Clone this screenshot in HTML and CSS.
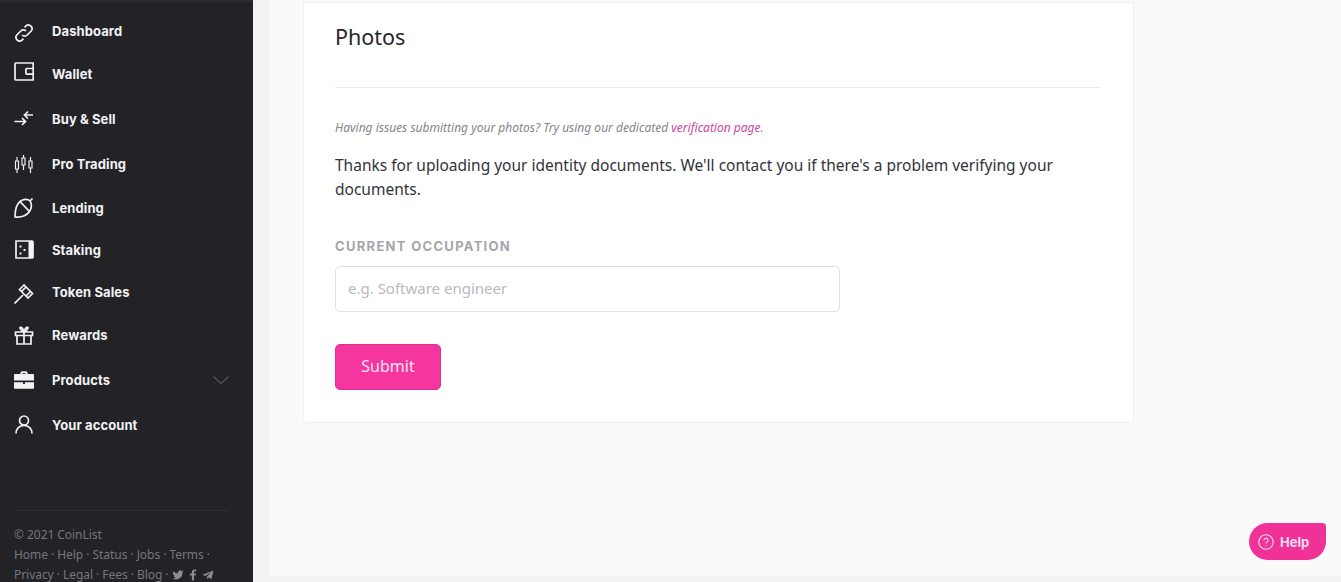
FILE: index.html
```html
<!doctype html>
<html lang="en">

<head>
    <meta charset="utf-8">
    <meta name="viewport" content="width=device-width, initial-scale=1, shrink-to-fit=no">
    <title>CoinList - Photos</title>
    <link rel="stylesheet" href="styles.css">
</head>

<body>
    <div class="sidebar">
        <nav class="nav">
            <a class="nav-item gap-0" href="#">
                <svg class="nav-icon shift-down" viewBox="0 0 20 20"><path d="M8 12c1.500 1.500 3.800 1.500 5.200 0l4-4A3.700 3.700 0 0 0 12 2.800L10.500 4.300"/><path d="M12 8c-1.500-1.500-3.800-1.500-5.200 0l-4 4A3.700 3.700 0 0 0 8 17.200l1.500-1.500"/></svg>
                <span>Dashboard</span>
            </a>
            <a class="nav-item gap-3" href="#">
                <svg class="nav-icon shift-up" viewBox="0 0 20 20"><path d="M19.200 1H2a1 1 0 0 0-1 1v15a1 1 0 0 0 1 1h17.200z"/><path d="M19.200 6.500h-6.500a.8.8 0 0 0-.8.8v4a.8.8 0 0 0 .8.8h6.500"/></svg>
                <span>Wallet</span>
            </a>
            <a class="nav-item gap-5" href="#">
                <svg class="nav-icon" viewBox="0 0 20 20"><path d="M.5 12.500h11M8 9l3.500 3.500L8 16"/><path d="M19 6h-8.500M14 2.500 10.500 6 14 9.500"/></svg>
                <span>Buy &amp; Sell</span>
            </a>
            <a class="nav-item gap-5" href="#">
                <svg class="nav-icon thin" viewBox="0 0 20 20"><path d="M3 3v4M3 15v4M1.500 7h3v8h-3zM9.500 1v3M9.500 11v5M8 4h3v7H8zM16.500 3v4M16.500 14v5M15 7h3v7h-3z"/></svg>
                <span>Pro Trading</span>
            </a>
            <a class="nav-item gap-4" href="#">
                <svg class="nav-icon" viewBox="0 0 20 20"><path d="M6 3.500c3-2.500 8-2.800 10-.5s1.800 7.500-.5 10.500z"/><path d="M6 3.500C3 6 1 11 1 19c6 .5 11.500-1.500 14.500-5.500"/><path d="M16 3l2.500-2.500"/></svg>
                <span>Lending</span>
            </a>
            <a class="nav-item gap-2" href="#">
                <svg class="nav-icon" viewBox="0 0 20 20"><path d="M2 1h16a1 1 0 0 1 1 1v15a1 1 0 0 1-1 1H2z"/><path class="solid" d="M14.500 1H19v17h-4.500zM5.500 5.500h2v2h-2zM9.500 9h2v2h-2zM5.500 12.500h2v2h-2z"/></svg>
                <span>Staking</span>
            </a>
            <a class="nav-item gap-2" href="#">
                <svg class="nav-icon shift-down" viewBox="0 0 20 20"><path d="M.5 19.500 9 11"/><path d="M10 1 5.500 5.500l8.500 8.500 4.500-4.500z"/><path d="M12 3 7.500 7.500M16.500 7.500 12 12"/></svg>
                <span>Token Sales</span>
            </a>
            <a class="nav-item gap-3" href="#">
                <svg class="nav-icon" viewBox="0 0 20 20"><path d="M1.500 7h17v3.500h-17zM3 10.500v8.500h14v-8.500M10 7v12"/><path d="M10 7C8 6 6 4.500 6 2.500 8 2 9.500 4 10 7c.5-3 2-5 4-4.500 0 2-2 3.500-4 4.500z"/></svg>
                <span>Rewards</span>
            </a>
            <a class="nav-item gap-5" href="#">
                <svg class="nav-icon" viewBox="1 1 22 21"><path class="solid" d="M8 5V4a2 2 0 0 1 2-2h4a2 2 0 0 1 2 2v1h6a1 1 0 0 1 1 1v6H1V6a1 1 0 0 1 1-1zm2 0h4V4h-4zM1 14h10v2h2v-2h10v6a1 1 0 0 1-1 1H2a1 1 0 0 1-1-1z"/></svg>
                <span>Products</span>
                <svg class="nav-chevron" viewBox="0 0 16 8"><path d="M.5.500 8 7.500 15.500.500"/></svg>
            </a>
            <a class="nav-item gap-5" href="#">
                <svg class="nav-icon" viewBox="0 0 20 20"><circle cx="10" cy="5.500" r="4.500"/><path d="M2 18.500c0-5 3.500-8 8-8s8 3 8 8"/></svg>
                <span>Your account</span>
            </a>
        </nav>

        <div class="side-footer">
            <div>&copy; 2021 CoinList</div>
            <div>Home &middot; Help &middot; Status &middot; Jobs &middot; Terms &middot;</div>
            <div class="social-line">Privacy &middot; Legal &middot; Fees &middot; Blog &middot;
                <svg class="social" viewBox="0 0 24 24"><path d="M23 5c-.8.400-1.700.600-2.600.700.900-.600 1.600-1.400 2-2.500-.900.500-1.800.900-2.900 1.100A4.500 4.500 0 0 0 11.800 8.500C8 8.300 4.700 6.500 2.500 3.800c-1.200 2-.600 4.600 1.400 6-.7 0-1.400-.2-2-.6 0 2.200 1.500 4.100 3.600 4.500-.7.200-1.400.2-2 .1.600 1.800 2.300 3.100 4.200 3.100A9 9 0 0 1 1 18.800 12.800 12.800 0 0 0 20.700 7.400c.9-.6 1.700-1.400 2.300-2.400z"/></svg>
                <svg class="social" viewBox="0 0 24 24"><path d="M14 23v-10h3.500l.5-4h-4V6.500c0-1.200.4-2 2-2h2.200V1c-.4 0-1.700-.2-3.200-.2-3.100 0-5.200 1.900-5.200 5.300V9H6v4h3.800v10z"/></svg>
                <svg class="social" viewBox="0 0 24 24"><path d="M23 3 1 11.500l6 2.500 11-7.500-8 9v5l3.500-3.500 5 3.500z"/></svg>
            </div>
        </div>
    </div>

    <div class="gutter"></div>

    <div class="main">
        <div class="content">
            <div class="card">
                <h2 class="card-title">Photos</h2>
                <hr class="divider">
                <p class="hint">Having issues submitting your photos? Try using our dedicated <a href="#">verification page</a>.</p>
                <p class="thanks">Thanks for uploading your identity documents. We'll contact you if there's a problem verifying your documents.</p>
                <label class="field-label" for="occupation">Current occupation</label>
                <input class="field-input" id="occupation" type="text" placeholder="e.g. Software engineer">
                <button class="submit" type="button">Submit</button>
            </div>
        </div>
        <div class="bottom-strip"></div>
    </div>

    <a class="help" href="#">
        <svg class="help-icon" viewBox="0 0 16 16"><circle cx="8" cy="8" r="7.200"/><path d="M6 6.200a2 2 0 1 1 3 1.700c-.7.400-1 .8-1 1.600"/><path d="M8 11.300v1"/></svg>
        <span>Help</span>
    </a>
</body>

</html>
```

FILE: styles.css
```css
* {
    box-sizing: border-box;
}

html, body {
    height: 582px;
}

body {
    margin: 0;
    display: flex;
    overflow: hidden;
    background-color: #fafafb;
    font-family: "Noto Sans", "Open Sans", sans-serif;
    color: #26262b;
}

a {
    text-decoration: none;
}

/* sidebar */
.sidebar {
    width: 253px;
    flex: none;
    background-color: #222227;
    border-top: 2px solid #2a2a30;
    display: flex;
    flex-direction: column;
}

.nav {
    padding: 9px 0 0 14px;
}

.nav-item {
    display: flex;
    align-items: center;
    height: 40px;
    color: #f2f2f4;
    font-family: "Inter", sans-serif;
    font-size: 13px;
    font-weight: 700;
    letter-spacing: .1px;
}

.gap-0 { margin-top: 0; }
.gap-2 { margin-top: 2px; }
.gap-3 { margin-top: 3px; }
.gap-4 { margin-top: 4px; }
.gap-5 { margin-top: 5px; }

.nav-icon {
    width: 20px;
    height: 20px;
    flex: none;
    margin-right: 18px;
    fill: none;
    stroke: #f2f2f4;
    stroke-width: 1.700;
}

.nav-icon.thin {
    stroke-width: 1.200;
}

.nav-icon.shift-down {
    margin-top: 3px;
}

.nav-icon.shift-up {
    margin-bottom: 4px;
}

.nav-icon .solid {
    fill: #f2f2f4;
    stroke: none;
}

.nav-chevron {
    width: 16px;
    height: 8px;
    margin-left: auto;
    margin-right: 24px;
    fill: none;
    stroke: #55555b;
    stroke-width: 1.200;
}

.side-footer {
    margin: 65px 24px 0 14px;
    padding-top: 14px;
    border-top: 1px solid #2f2f35;
    color: #77777c;
    font-size: 12px;
    line-height: 20px;
    letter-spacing: -.05px;
    white-space: nowrap;
}

.social {
    width: 12px;
    height: 12px;
    vertical-align: -2px;
    fill: #8c8c91;
}

/* main column */
.gutter {
    width: 17px;
    flex: none;
    background-color: #f2f2f4;
}

.main {
    flex: 1;
    display: flex;
    flex-direction: column;
}

.content {
    flex: 1;
    padding: 2px 0 0 33px;
}

.bottom-strip {
    height: 6px;
    background-color: #f2f2f4;
}

.card {
    width: 831px;
    height: 421px;
    padding: 20px 32px 0 31px;
    background-color: #fff;
    border: 1px solid #f1f1f3;
    border-radius: 0 0 5px 5px;
}

.card-title {
    margin: 0;
    font-size: 21.500px;
    font-weight: 400;
    line-height: 28px;
    color: #26262b;
}

.divider {
    margin: 36px 0 0;
    border: 0;
    border-top: 1px solid #ececee;
}

.hint {
    margin: 32px 0 0;
    font-size: 12px;
    font-style: italic;
    line-height: 16px;
    color: #85858a;
}

.hint a {
    color: #c9489a;
}

.thanks {
    margin: 17px 0 0;
    font-size: 15.500px;
    line-height: 24px;
    color: #33333a;
}

.field-label {
    display: block;
    margin-top: 37px;
    font-family: "Inter", sans-serif;
    font-size: 13px;
    font-weight: 700;
    line-height: 16px;
    letter-spacing: 1.300px;
    text-transform: uppercase;
    color: #a6a6aa;
}

.field-input {
    display: block;
    width: 505px;
    height: 46px;
    margin-top: 12px;
    padding: 0 12px 2px;
    background-color: #fff;
    border: 1px solid #e0e0e3;
    border-radius: 5px;
    font-family: "Noto Sans", sans-serif;
    font-size: 15px;
}

.field-input::placeholder {
    color: #b9b9bd;
}

.submit {
    display: block;
    width: 106px;
    height: 46px;
    margin-top: 32px;
    padding: 0 0 2px;
    background-color: #f5369f;
    border: 1px solid #e02f90;
    border-radius: 5px;
    color: #fde3f2;
    font-family: "Noto Sans", sans-serif;
    font-size: 16px;
}

/* floating help button */
.help {
    position: absolute;
    left: 1249px;
    top: 523px;
    width: 77px;
    height: 37px;
    display: flex;
    align-items: center;
    padding-left: 9px;
    background-color: #ef3198;
    border-radius: 19px 4px 19px 19px;
    color: #fbdcee;
    font-family: "Inter", sans-serif;
    font-size: 13px;
    font-weight: 700;
}

.help-icon {
    width: 16px;
    height: 16px;
    margin-right: 6px;
    fill: none;
    stroke: #fbdcee;
    stroke-width: 1.100;
}
```
